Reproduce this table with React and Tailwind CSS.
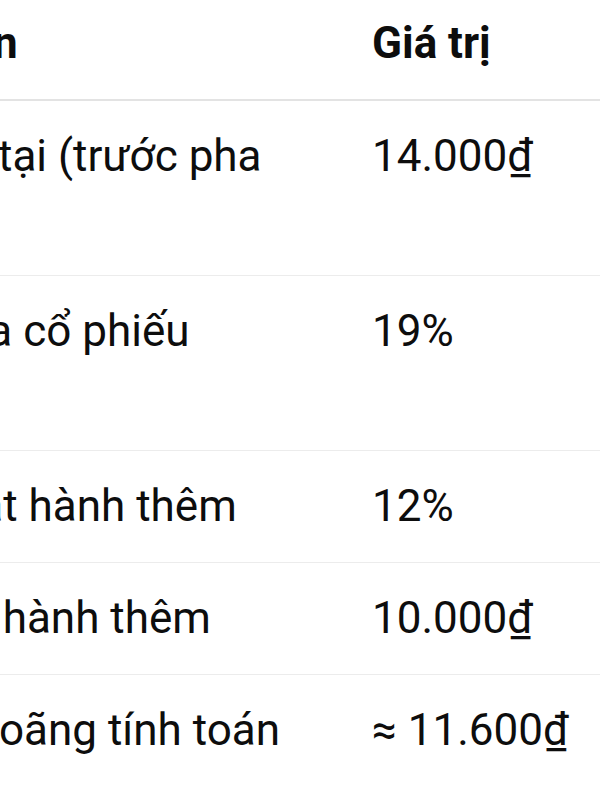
export default function App() {
  const rows = [
    { label: "Giá hiện tại (trước pha loãng)", value: "14.000₫" },
    { label: "Tỷ lệ chia cổ phiếu thưởng", value: "19%" },
    { label: "Tỷ lệ phát hành thêm", value: "12%" },
    { label: "Giá phát hành thêm", value: "10.000₫" },
    { label: "Giá pha loãng tính toán", value: "≈ 11.600₫" },
  ];
  return (
    <div
      className="w-[600px] h-[800px] overflow-hidden bg-white text-[#0d0d0d]"
      style={{ fontFamily: "Roboto, 'Noto Sans', sans-serif" }}
    >
      <div className="-mt-[12px] -ml-[195px] w-[843px] flex flex-col">
        <div className="grid grid-cols-[543px_300px] border-b-2 border-[#e3e3e3]">
          <div className="px-6 py-6 text-[44px] leading-[63px] font-bold">Thông tin</div>
          <div className="px-6 py-6 text-[44px] leading-[63px] font-bold">Giá trị</div>
        </div>
        {rows.map((r, i) => (
          <div
            key={i}
            className="grid grid-cols-[543px_300px] border-b border-[#ececec] last:border-b-0"
          >
            <div className="px-6 py-6 text-[44px] leading-[63px]">{r.label}</div>
            <div className="px-6 py-6 text-[44px] leading-[63px]">{r.value}</div>
          </div>
        ))}
      </div>
    </div>
  );
}
